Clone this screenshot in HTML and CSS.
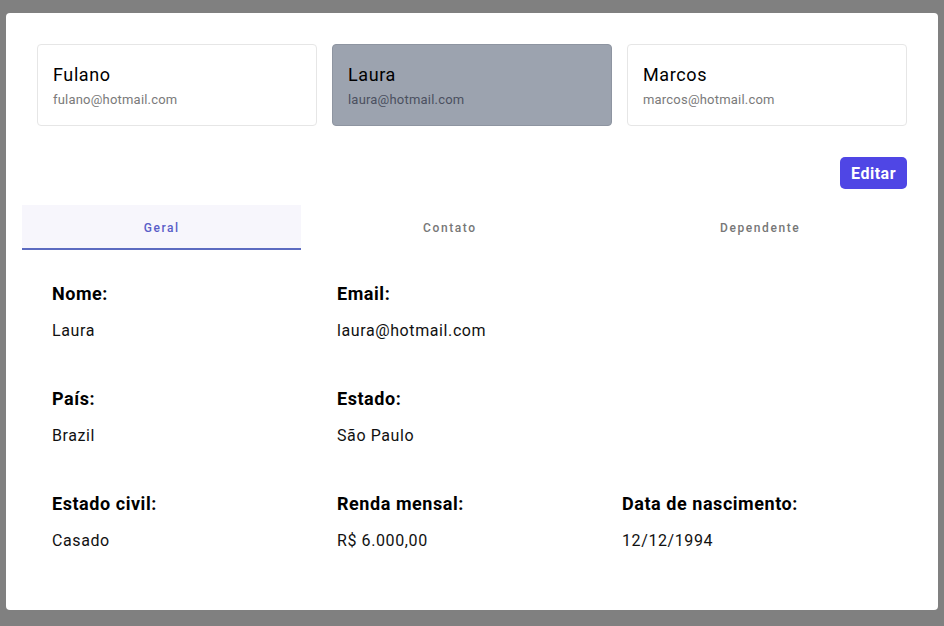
FILE: index.html
```html
<!DOCTYPE html>
<html lang="pt-BR">
<head>
<meta charset="utf-8">
<title>Usuários</title>
<link rel="stylesheet" href="styles.css">
</head>
<body>
<div class="modal">
  <div class="cards">
    <div class="card">
      <div class="card-name">Fulano</div>
      <div class="card-email">fulano@hotmail.com</div>
    </div>
    <div class="card card-active">
      <div class="card-name">Laura</div>
      <div class="card-email">laura@hotmail.com</div>
    </div>
    <div class="card">
      <div class="card-name">Marcos</div>
      <div class="card-email">marcos@hotmail.com</div>
    </div>
  </div>
  <div class="actions">
    <button class="btn-edit">Editar</button>
  </div>
  <div class="tabs">
    <div class="tab tab-active">Geral</div>
    <div class="tab">Contato</div>
    <div class="tab">Dependente</div>
  </div>
  <div class="details">
    <div class="field"><div class="label">Nome:</div><div class="value">Laura</div></div>
    <div class="field"><div class="label">Email:</div><div class="value">laura@hotmail.com</div></div>
    <div class="field"></div>
    <div class="field"><div class="label">País:</div><div class="value">Brazil</div></div>
    <div class="field"><div class="label">Estado:</div><div class="value">São Paulo</div></div>
    <div class="field"></div>
    <div class="field"><div class="label">Estado civil:</div><div class="value">Casado</div></div>
    <div class="field"><div class="label">Renda mensal:</div><div class="value">R$ 6.000,00</div></div>
    <div class="field"><div class="label">Data de nascimento:</div><div class="value">12/12/1994</div></div>
  </div>
</div>
</body>
</html>
```

FILE: styles.css
```css
* { box-sizing: border-box; }
html, body { margin: 0; padding: 0; }
body {
  background: #808080;
  font-family: Roboto, "Liberation Sans", Arial, sans-serif;
  color: #111;
  width: 944px;
  height: 626px;
  overflow: hidden;
}
.modal {
  margin: 13px 6px 0 6px;
  width: 932px;
  height: 597px;
  background: #fff;
  border-radius: 4px;
  padding: 31px 16px 0 16px;
}
.cards {
  display: flex;
  gap: 15px;
  padding: 0 15px;
}
.card {
  flex: 1 1 0;
  height: 82px;
  border: 1px solid #e6e6e6;
  border-radius: 4px;
  padding: 16px 15px 0 15px;
  background: #fff;
}
.card-active {
  background: #9ca3af;
  border-color: #8e95a1;
}
.card-name {
  font-size: 18px;
  line-height: 27px;
  letter-spacing: 0.6px;
  color: #000;
}
.card-email {
  margin-top: 2px;
  font-size: 13px;
  line-height: 20px;
  letter-spacing: 0.2px;
  color: #7a7a7a;
}
.card-active .card-email { color: #4b5060; }
.actions {
  display: flex;
  justify-content: flex-end;
  padding: 0 15px;
  margin-top: 31px;
}
.btn-edit {
  height: 32px;
  padding: 0 11px;
  border: none;
  border-radius: 5px;
  background: #4f46e5;
  color: #fff;
  font-family: Roboto, "Liberation Sans", Arial, sans-serif;
  font-weight: 700;
  font-size: 16px;
  letter-spacing: 0.5px;
}
.tabs {
  display: flex;
  margin-top: 16px;
}
.tab {
  flex: 1 1 auto;
  height: 45px;
  padding-top: 3px;
  display: flex;
  align-items: center;
  justify-content: center;
  font-size: 12px;
  font-weight: 500;
  letter-spacing: 1.6px;
  color: #777;
  border-bottom: 2px solid transparent;
}
.tab-active {
  background: #f7f6fc;
  color: #5a5ec8;
  border-bottom-color: #5c6bc0;
}
.details {
  display: grid;
  grid-template-columns: repeat(3, 1fr);
  row-gap: 42px;
  padding: 30px 15px 0 30px;
}
.label {
  font-size: 18px;
  line-height: 27px;
  font-weight: 700;
  letter-spacing: 0.55px;
  color: #000;
}
.value {
  margin-top: 12px;
  font-size: 16px;
  line-height: 24px;
  letter-spacing: 0.6px;
  color: #111;
}
.field:empty { min-height: 63px; }
```
